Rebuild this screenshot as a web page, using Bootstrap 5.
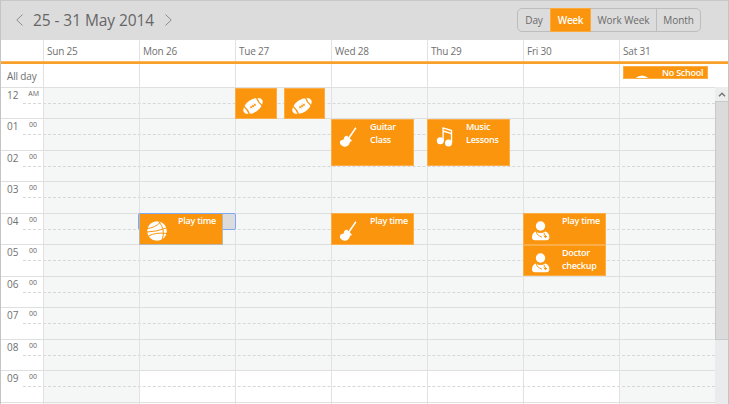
<!DOCTYPE html>
<html lang="en">
<head>
<meta charset="utf-8">
<title>25 - 31 May 2014</title>
<link href="https://cdn.jsdelivr.net/npm/bootstrap@5.3.0/dist/css/bootstrap.min.css" rel="stylesheet">
<style>
body{font-family:"Open Sans","Noto Sans",sans-serif;font-size:10px;line-height:13px;color:#707070;background:#fff}
.scheduler{width:729px;height:404px;border-left:1px solid #c4c4c4;border-right:1px solid #c4c4c4}
.topbar{height:40px;background:#dcdcdc;border-top:1px solid #c8c8c8;padding:0 27px 2px 15px}
.range{font-size:15.5px;line-height:20px;letter-spacing:-.08px;color:#666;margin:0 11px 0 10px}
.topbar svg{fill:none;stroke:#8c8c8c;stroke-width:1}
.views .btn{height:24px;padding:0;font-size:10px;line-height:22px;color:#6a6a6a;border:1px solid #bdbdbd;border-radius:5px;background:transparent;flex:none;white-space:nowrap;letter-spacing:-.1px}
.views .btn.active{background:#fa950d;border-color:#fbab3d;color:#fff;font-weight:600;letter-spacing:-.3px}
.gutter{width:42px;flex:none}
.day{width:96px;flex:none;border-left:1px solid #e2e2e2}
.heads{height:21px;line-height:22px;letter-spacing:-.2px}
.heads .day{padding-left:3px}
.rule{height:3px;background:#f9a02b;border-top:1px solid #fbb55b}
.allday{height:23px;line-height:25px}
.allday .gutter{padding-left:6px;white-space:nowrap;letter-spacing:-.15px}
.body-grid{display:grid;height:317px;overflow:hidden}
.layer{grid-area:1/1;min-width:0}
.off{background:#f5f7f7}
.work{background:linear-gradient(#f5f7f7 284px,#fff 284px)}
.hour{border-top:1px solid #dfdfdf;height:31px;width:714px}
.hour:nth-child(even){height:32px}
.hour .num{width:22px;padding:1px 0 0 6px;height:30px}
.hour .half{height:16px;border-bottom:1px dashed #d7d7d7;flex:1}
.hour .min{font-size:7px;line-height:12px;width:20px;padding-right:6px;text-align:right;color:#666}
.hour:first-child .min{padding-right:4px}
.events .day,.allday .day{position:relative}
.ev{position:absolute;left:-1px;width:83px;background:#fa950d;border:1px solid #fbae47;color:#fff;overflow:hidden;font-size:9px;line-height:13px;font-weight:600;letter-spacing:-.25px;z-index:2}
.ev svg{position:absolute;left:6px;top:6px;width:22px;height:22px;fill:#fff}
.ev span{position:absolute;left:38px;top:0;white-space:nowrap}
.t0{top:1px;height:31px}.t1{top:32px;height:47px}.t4{top:126px;height:32px}.t5{top:158px;height:31px}
.slim{width:42px}.ev.second{left:48px;width:41px}
.sel{position:absolute;left:-2px;top:126px;width:98px;height:17px;background:#dcdcdc;border:1px solid #7da8f5;border-radius:2px;z-index:1}
.ev.chosen{border-color:#b9b8a8;border-top-color:#7da8f5;width:84px}
.ev.school{left:3px;top:2px;width:85px;height:13px}
.ev.school svg{left:3px;top:7px;width:32px;height:32px}
.ev.school span{top:0;line-height:12px}
.scroller{width:13px;background:#e9ebec}
.scroller .up{height:14px;background:#eceded}
.thumb{height:239px;background:#dbdbdb;border:1px solid #c9c9c9;border-right:0}
</style>
</head>
<body class="m-0 overflow-hidden">
<svg class="d-none">
<symbol id="ball" viewBox="0 0 22 22"><g transform="rotate(-35 11 11)"><path d="M.3 9.200Q4 4.600 11 4.600t10.700 4.600q.5 1.800 0 3.600Q18 17.400 11 17.400T.3 12.800q-.5-1.800 0-3.600z"/><path d="M3.300 5.500q1.600 5.500 0 11M18.700 5.500q-1.600 5.500 0 11" fill="none" stroke="#fa950d" stroke-width="1.300"/><path d="M7.400 11h7.200M9 9.500v3M11 9.500v3M13 9.500v3" fill="none" stroke="#fa950d" stroke-width=".9"/></g></symbol>
<symbol id="guitar" viewBox="0 0 22 22"><path d="m10 11.700 6.300-8.900.9-1.500 1.300.9-1 1.500-6.200 9z"/><path d="M8.800 10.300c.3.800 1 1.300 2 1.900l1.400 1.500.9.900c-1 .3-1.800 1-2 2-.3 2.300-2.700 3.800-4.800 3.500-2.300-.3-4.100-2.200-3.800-4.100.3-1.600 2.100-1.500 3.200-1.900.9-.4.700-1.300.9-2.200.3-1 1.100-1.600 2.200-1.600z" stroke="#fff" stroke-width="1.200"/></symbol>
<symbol id="music" viewBox="0 0 22 22"><circle cx="6.300" cy="14.800" r="3.500"/><circle cx="14.500" cy="17" r="3.500"/><path d="M9.100 15V1.900l8.400 2.700V17M9.100 5l8.400 2.700" fill="none" stroke="#fff" stroke-width="1.400"/></symbol>
<symbol id="basket" viewBox="0 0 22 22"><circle cx="11" cy="11" r="9.800"/><path d="M1 8.500Q9 8 14.500 2M1 12Q10 11.800 20.500 8M2.500 16Q10 12 21 13.500M12.500 1q7.500 8.500 3.500 19" fill="none" stroke="#fa950d" stroke-width="1"/></symbol>
<symbol id="doctor" viewBox="0 0 22 22"><circle cx="10.500" cy="6" r="4.700"/><path d="M5.900 11.500q4.600 3 9.200 0 4.300 1.200 4.300 6-.3 2.700-3 2.700H5q-2.900 0-3-2.700.1-5 3.900-6z"/><path d="M6.300 11.500q0 2.800 2.700 4.200l3 1.600M13.800 12.500q1.800 1.500 0 3" fill="none" stroke="#fa950d" stroke-width=".9"/><path d="M14 16.500h3M15.500 15v3" stroke="#fa950d" stroke-width="1.200"/></symbol>
</svg>
<main class="scheduler d-flex flex-column">
<header class="topbar d-flex align-items-center justify-content-between">
<div class="d-flex align-items-center"><svg width="7" height="12"><path d="M6.500.5.800 6l5.700 5.500"/></svg><h1 class="range fw-normal">25 - 31 May 2014</h1><svg width="7" height="12"><path d="m.5.500 5.700 5.500-5.700 5.500"/></svg></div>
<div class="views btn-group"><button class="btn" style="width:34px">Day</button><button class="btn active" style="width:41px">Week</button><button class="btn" style="width:67px">Work Week</button><button class="btn" style="width:45px">Month</button></div>
</header>
<div class="heads d-flex"><div class="gutter"></div><div class="day">Sun 25</div><div class="day">Mon 26</div><div class="day">Tue 27</div><div class="day">Wed 28</div><div class="day">Thu 29</div><div class="day">Fri 30</div><div class="day">Sat 31</div></div>
<div class="rule"></div>
<div class="allday d-flex"><div class="gutter">All day</div><div class="day"></div><div class="day"></div><div class="day"></div><div class="day"></div><div class="day"></div><div class="day"></div><div class="day"><div class="ev school"><svg viewBox="0 0 32 32"><circle cx="15" cy="10.500" r="9"/></svg><span>No School</span></div></div></div>
<div class="d-flex">
<div class="body-grid flex-grow-1" style="width:714px">
<div class="layer d-flex">
<div class="gutter"></div><div class="day off"></div><div class="day work"></div><div class="day work"></div><div class="day work"></div><div class="day work"></div><div class="day work"></div><div class="day off"></div>
</div>
<div class="layer">
<div class="hour d-flex"><div class="num">12</div><div class="half"><div class="min">AM</div></div></div>
<div class="hour d-flex"><div class="num">01</div><div class="half"><div class="min">00</div></div></div>
<div class="hour d-flex"><div class="num">02</div><div class="half"><div class="min">00</div></div></div>
<div class="hour d-flex"><div class="num">03</div><div class="half"><div class="min">00</div></div></div>
<div class="hour d-flex"><div class="num">04</div><div class="half"><div class="min">00</div></div></div>
<div class="hour d-flex"><div class="num">05</div><div class="half"><div class="min">00</div></div></div>
<div class="hour d-flex"><div class="num">06</div><div class="half"><div class="min">00</div></div></div>
<div class="hour d-flex"><div class="num">07</div><div class="half"><div class="min">00</div></div></div>
<div class="hour d-flex"><div class="num">08</div><div class="half"><div class="min">00</div></div></div>
<div class="hour d-flex"><div class="num">09</div><div class="half"><div class="min">00</div></div></div>
<div class="hour"></div>
</div>
<div class="layer events d-flex">
<div class="gutter"></div>
<div class="day"></div>
<div class="day"><div class="sel"></div><div class="ev t4 chosen"><svg><use href="#basket"/></svg><span>Play time</span></div></div>
<div class="day"><div class="ev t0 slim"><svg><use href="#ball"/></svg></div><div class="ev t0 slim second"><svg><use href="#ball"/></svg></div></div>
<div class="day"><div class="ev t1"><svg><use href="#guitar"/></svg><span>Guitar<br>Class</span></div><div class="ev t4"><svg><use href="#guitar"/></svg><span>Play time</span></div></div>
<div class="day"><div class="ev t1"><svg><use href="#music"/></svg><span>Music<br>Lessons</span></div></div>
<div class="day"><div class="ev t4"><svg><use href="#doctor"/></svg><span>Play time</span></div><div class="ev t5"><svg><use href="#doctor"/></svg><span>Doctor<br>checkup</span></div></div>
<div class="day"></div>
</div>
</div>
<div class="scroller flex-shrink-0"><div class="up d-flex align-items-center justify-content-center"><svg width="8" height="5" fill="none" stroke="#777" stroke-width="1.5"><path d="M1 4.200 4 1.200l3 3"/></svg></div><div class="thumb"></div></div>
</div>
</main>
<script src="https://cdn.jsdelivr.net/npm/bootstrap@5.3.0/dist/js/bootstrap.bundle.min.js"></script>
</body>
</html>
